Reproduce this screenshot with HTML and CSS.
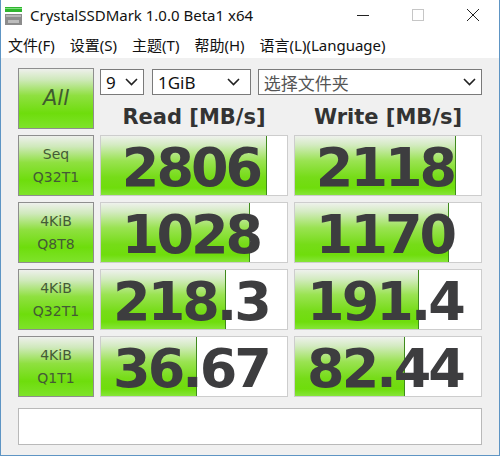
FILE: index.html
```html
<!DOCTYPE html>
<html lang="zh-CN">
<head>
  <meta charset="UTF-8" />
  <title>CrystalSSDMark 1.0.0 Beta1 x64</title>
  <link rel="stylesheet" href="styles.css">
</head>
<body>
  <div class="window">
    <div class="titlebar">
      <svg class="app-icon" width="18" height="18" viewBox="0 0 18 18">
        <rect x="0" y="0" width="17" height="5" fill="#2fb52f"/>
        <rect x="0" y="1" width="17" height="1" fill="#7de07d"/>
        <rect x="0" y="7" width="17" height="11" fill="#8c8c8c"/>
        <rect x="1" y="8" width="15" height="2" fill="#b5b5b5"/>
        <rect x="3" y="13" width="11" height="3" fill="#bdbdbd"/>
      </svg>
      <span class="title">CrystalSSDMark 1.0.0 Beta1 x64</span>
      <div class="win-buttons">
        <svg width="46" height="30" viewBox="0 0 46 30"><line x1="17" y1="15.5" x2="29" y2="15.5" stroke="#222" stroke-width="1"/></svg>
        <svg width="46" height="30" viewBox="0 0 46 30"><rect x="17.5" y="9.5" width="11" height="11" fill="none" stroke="#c6c6c6" stroke-width="1"/></svg>
        <svg width="46" height="30" viewBox="0 0 46 30"><path d="M17 9 L29 21 M29 9 L17 21" stroke="#222" stroke-width="1"/></svg>
      </div>
    </div>

    <div class="menubar">
      <span>文件(F)</span>
      <span>设置(S)</span>
      <span>主题(T)</span>
      <span>帮助(H)</span>
      <span>语言(L)(Language)</span>
    </div>

    <div class="client">
      <div class="grid">
        <div class="btn all">All</div>
        <div class="controls">
          <div class="combos">
            <div class="combo c-count">9<svg class="chev" width="13" height="8" viewBox="0 0 13 8"><polyline points="1,1 6.5,6.5 12,1" fill="none" stroke="#222" stroke-width="1.6"/></svg></div>
            <div class="combo c-size">1GiB<svg class="chev" width="13" height="8" viewBox="0 0 13 8"><polyline points="1,1 6.5,6.5 12,1" fill="none" stroke="#222" stroke-width="1.6"/></svg></div>
            <div class="combo c-folder"><span class="ph">选择文件夹</span><svg class="chev" width="13" height="8" viewBox="0 0 13 8"><polyline points="1,1 6.5,6.5 12,1" fill="none" stroke="#222" stroke-width="1.6"/></svg></div>
          </div>
          <div class="heads">
            <div class="head">Read [MB/s]</div>
            <div class="head">Write [MB/s]</div>
          </div>
        </div>

        <div class="btn">Seq<br>Q32T1</div>
        <div class="result"><div class="bar" style="width: 88.7%"></div><span class="num">2806</span></div>
        <div class="result"><div class="bar" style="width: 86.2%"></div><span class="num">2118</span></div>

        <div class="btn">4KiB<br>Q8T8</div>
        <div class="result"><div class="bar" style="width: 79.6%"></div><span class="num">1028</span></div>
        <div class="result"><div class="bar" style="width: 82.3%"></div><span class="num">1170</span></div>

        <div class="btn">4KiB<br>Q32T1</div>
        <div class="result"><div class="bar" style="width: 66.7%"></div><span class="num">218.3</span></div>
        <div class="result"><div class="bar" style="width: 66.1%"></div><span class="num">191.4</span></div>

        <div class="btn">4KiB<br>Q1T1</div>
        <div class="result"><div class="bar" style="width: 51.1%"></div><span class="num">36.67</span></div>
        <div class="result"><div class="bar" style="width: 58.6%"></div><span class="num">82.44</span></div>
      </div>
      <div class="comment"></div>
    </div>
  </div>
</body>
</html>
```

FILE: styles.css
```css
body {
  margin: 0;
  background: #fff;
}

.window {
  box-sizing: border-box;
  width: 500px;
  height: 456px;
  border: 1px solid #5e95c4;
  border-top: none;
  display: flex;
  flex-direction: column;
  background: #f0f0f0;
  overflow: hidden;
}

/* title bar */
.titlebar {
  height: 30px;
  background: #fff;
  display: flex;
  align-items: center;
  font-family: "Noto Sans", "Open Sans", sans-serif;
  font-size: 15px;
  color: #111;
}
.app-icon {
  margin-left: 4px;
  margin-right: 7px;
  margin-top: 1px;
}
.win-buttons {
  margin-left: auto;
  display: flex;
  gap: 9px;
  margin-right: 3px;
}
.win-buttons svg {
  display: block;
}

/* menu */
.menubar {
  height: 28px;
  background: #fff;
  display: flex;
  align-items: center;
  gap: 15px;
  padding-left: 7px;
  font-family: "Noto Sans", "Noto Sans CJK SC", sans-serif;
  font-size: 15px;
  color: #111;
}

.client {
  padding: 10px 16px 0 17px;
}

.grid {
  display: grid;
  grid-template-columns: 76px 188px 188px;
  grid-auto-rows: 61px;
  column-gap: 6px;
  row-gap: 6px;
}

/* green buttons on the left */
.btn {
  box-sizing: border-box;
  border: 1px solid #8e8e8e;
  background: linear-gradient(#eef0ec 0%, #cfe9bb 18%, #8fe040 45%, #6edd0c 75%, #7ee32a 100%);
  display: flex;
  align-items: center;
  justify-content: center;
  text-align: center;
  font-family: "DejaVu Sans", sans-serif;
  font-size: 14px;
  line-height: 23px;
  color: #445a36;
}
.btn.all {
  font-size: 21px;
  font-style: italic;
  color: #3f5c2e;
}

/* combo boxes + column headers */
.controls {
  grid-column: 2 / 4;
  display: flex;
  flex-direction: column;
}
.combos {
  display: flex;
  margin-top: 1px;
  height: 26px;
}
.combo {
  box-sizing: border-box;
  height: 26px;
  border: 1px solid #7a7a7a;
  background: #fff;
  display: flex;
  align-items: center;
  padding-left: 5px;
  padding-right: 5px;
  font-family: "Noto Sans", "Open Sans", sans-serif;
  font-size: 17px;
  color: #111;
}
.chev {
  margin-left: auto;
}
.c-count { width: 44px; }
.c-size { width: 99px; margin-left: 8px; padding-right: 10px; }
.c-folder { width: 225px; margin-left: 7px; padding-right: 5px; }
.ph {
  font-family: "Noto Sans CJK SC", sans-serif;
  font-size: 17px;
  color: #555;
}

.heads {
  display: grid;
  grid-template-columns: 188px 188px;
  column-gap: 6px;
  margin-top: 10px;
}
.head {
  text-align: center;
  font-family: "DejaVu Sans", sans-serif;
  font-weight: bold;
  font-size: 21px;
  line-height: 24px;
  color: #333;
}

/* results */
.result {
  position: relative;
  box-sizing: border-box;
  border: 1px solid #cdcdcd;
  background: #fff;
  display: flex;
  align-items: center;
  justify-content: center;
}
.bar {
  position: absolute;
  left: 0;
  top: 0;
  bottom: 0;
  background: linear-gradient(#eef1ec 0%, #d4ebc2 15%, #9ae352 42%, #76dc18 70%, #6fdd0c 88%, #86e538 100%);
  border-right: 1px solid #3f8a1c;
}
.num {
  position: relative;
  top: 2px;
  font-family: "DejaVu Sans", sans-serif;
  font-weight: bold;
  font-size: 54px;
  letter-spacing: -3px;
  color: #3d3d3f;
  line-height: 1;
  margin-left: -6px;
}

.comment {
  box-sizing: border-box;
  margin-top: 11px;
  width: 464px;
  height: 37px;
  border: 1px solid #b9b9b9;
  background: #fff;
}
```
